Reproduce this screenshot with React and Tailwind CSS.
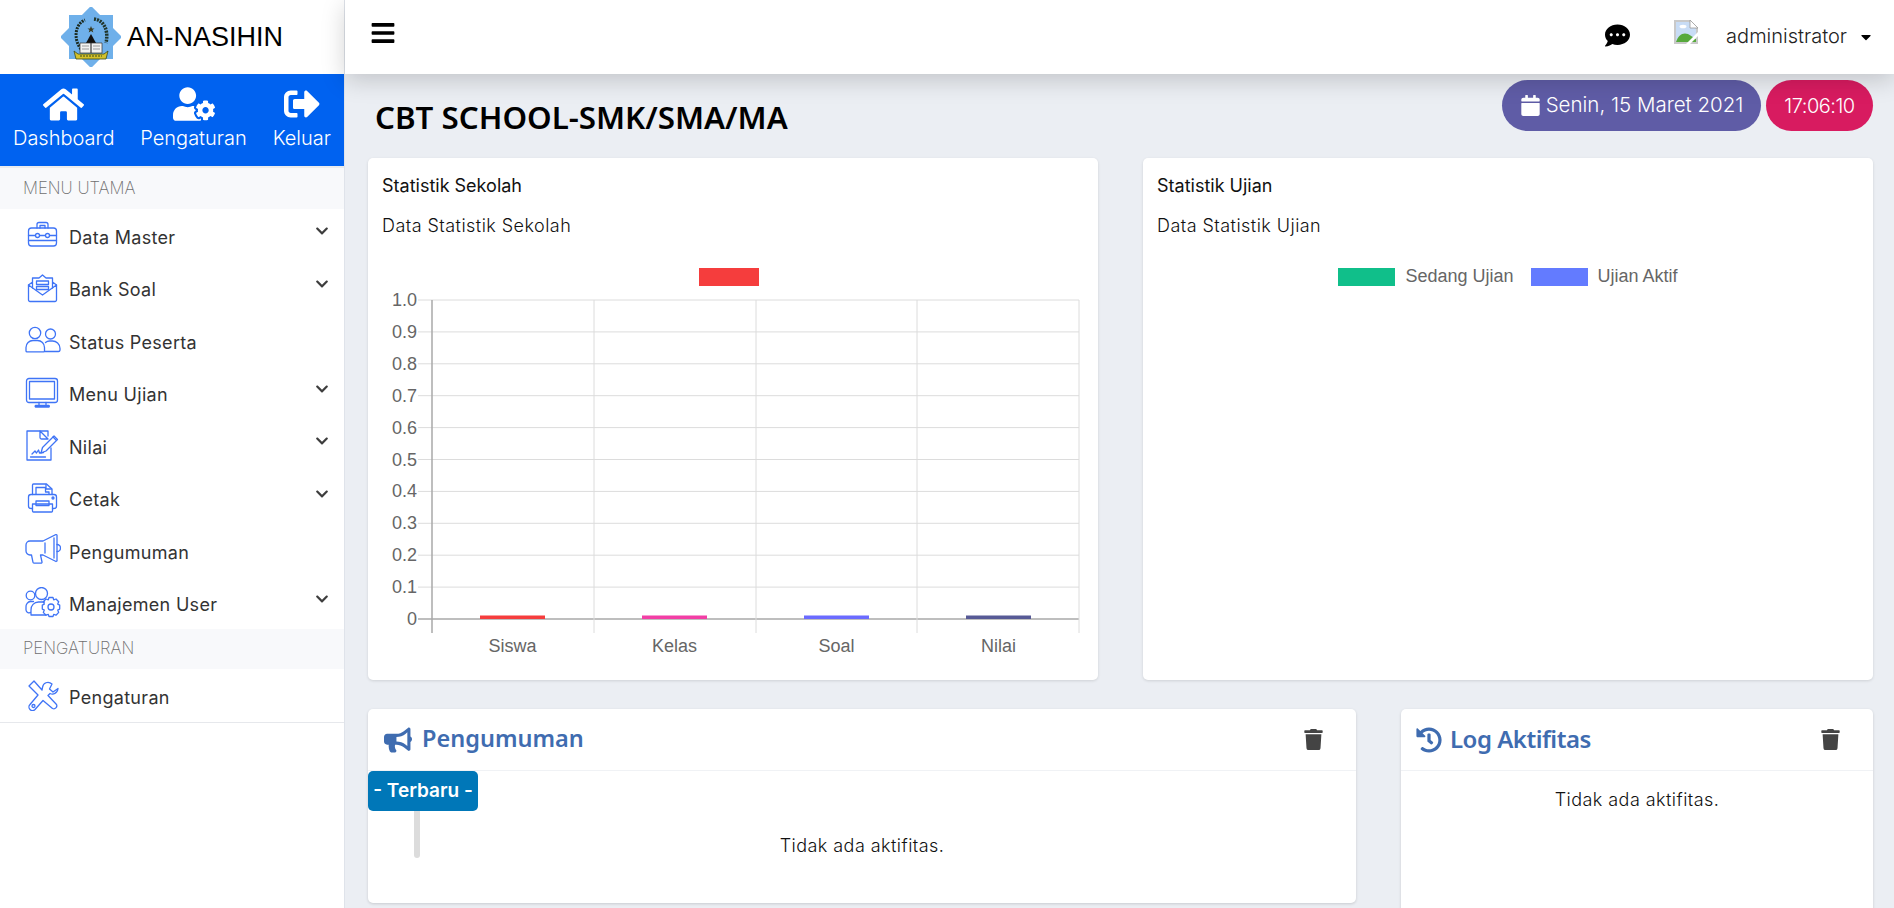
import { FaHome, FaUserCog, FaSignOutAlt, FaCalendar, FaCommentDots, FaChevronDown, FaBullhorn, FaHistory, FaTrash, FaBars, FaCaretDown } from "react-icons/fa";

const poppins = "font-['Inter','Noto_Sans',sans-serif]";

// Outline menu icons, 36x32 box
const Ico = ({ children }) => (
  <svg viewBox="0 0 36 32" className="w-9 h-8 shrink-0" fill="none" stroke="#3f74f6" strokeWidth="1.3" strokeLinecap="round" strokeLinejoin="round">
    {children}
  </svg>
);

const icons = {
  master: (
    <Ico>
      <path d="M12 9V5.5a2 2 0 0 1 2-2h7a2 2 0 0 1 2 2V9M15 9V6.5h5V9" />
      <rect x="3.5" y="9" width="28" height="18" rx="3" />
      <path d="M3.5 16.5h7M15 16.5h5M24.5 16.5h7M3.5 21.5h28" />
      <circle cx="12.5" cy="16.5" r="2" />
      <circle cx="22.5" cy="16.5" r="2" />
    </Ico>
  ),
  soal: (
    <Ico>
      <path d="M3.5 13v15a1.5 1.5 0 0 0 1.5 1.5h25a1.5 1.5 0 0 0 1.5-1.5V13L17.5 23z" />
      <path d="M3.5 13l4-3V6h6.5L17.5 3l3.5 3h6.5v4l4 3M7.5 10v6M27.5 10v6" />
      <rect x="11.5" y="9" width="12" height="3.5" />
      <rect x="11.5" y="14.5" width="12" height="3" />
    </Ico>
  ),
  peserta: (
    <Ico>
      <circle cx="10" cy="9" r="5.7" />
      <circle cx="25.5" cy="10" r="5" />
      <path d="M1 27v-3.5a7 7 0 0 1 7-7h4.5a7 7 0 0 1 7 7V27a.8.8 0 0 1-.8.8H2a1 1 0 0 1-1-.8z" />
      <path d="M20.5 18.5a6 6 0 0 1 4-1.5h2.5a7.5 7.5 0 0 1 8 7.5v1.7a1.5 1.5 0 0 1-1.5 1.3H19.5" />
    </Ico>
  ),
  ujian: (
    <Ico>
      <rect x="1.5" y="1.5" width="31" height="24" rx="2.5" />
      <rect x="4.5" y="4.5" width="25" height="17.5" />
      <path d="M14 25.5v3M21 25.5v3M10.5 28.5a1 1 0 0 0 0 1.5h13.5a1 1 0 0 0 0-1.5z" />
    </Ico>
  ),
  nilai: (
    <Ico>
      <path d="M23 7V2H2v29h24V19" />
      <path d="M15 2v6.5a1.5 1.5 0 0 0 1.5 1.5H23L15 2z" />
      <path d="M16 24l1.5-5.5L29 7l3.5 3.5L21 22z" />
      <path d="M28 8l3 3M7 25l3-3 1.5 2 2-3 1 3 4-.5M5.5 28h15" />
    </Ico>
  ),
  cetak: (
    <Ico>
      <path d="M7.5 12V3a1 1 0 0 1 1-1h13l5.5 5v5" />
      <path d="M11 12V5.5h9.5V10H24v2M21 2.5V7h5.5" />
      <path d="M7.5 12.5H6A2.5 2.5 0 0 0 3.5 15v9A2.5 2.5 0 0 0 6 26.5h1.5M27.5 12.5H29a2.5 2.5 0 0 1 2.5 2.5v9a2.5 2.5 0 0 1-2.5 2.5h-1.5" />
      <path d="M7.5 12.5h20M7.5 22v7a1 1 0 0 0 1 1h18a1 1 0 0 0 1-1v-7z" />
      <rect x="11" y="19" width="13" height="4.5" />
      <circle cx="28" cy="16" r="1" />
    </Ico>
  ),
  pengumuman: (
    <Ico>
      <path d="M5 7h13L31 .5l1 .5v26l-1 .5L18 21h-2.5l1.5 7a1 1 0 0 1-1 1.2H9a1 1 0 0 1-1-.9L6.500 21H5a4 4 0 0 1-4-4v-6a4 4 0 0 1 4-4z" />
      <path d="M20 9v10M29 4v20M32 10.5a3.5 3.5 0 0 1 0 7" />
    </Ico>
  ),
  user: (
    <Ico>
      <circle cx="5.5" cy="8.5" r="4.3" />
      <circle cx="16.5" cy="6.5" r="6" />
      <path d="M6 25a3 3 0 0 1-5-2v-3a5 5 0 0 1 4.5-5.5h3M6 28v-5a7.5 7.5 0 0 1 7.5-8h6M6 28h15" />
      <circle cx="26" cy="20" r="3" />
      <path d="M24 10.500h4l.7 2.300 2.300-.8 2.700 2.800-1 2.300 2 1v4l-2 1 1 2.300-2.700 2.800-2.300-.8-.7 2.100h-4l-.7-2.100-2.300.8-2.700-2.800 1-2.300-2-1v-4l2-1-1-2.300 2.700-2.800 2.300.8z" />
    </Ico>
  ),
  setting: (
    <Ico>
      <path d="M9 2L4 7l9 9-8 9.5a3.5 3.5 0 0 0 5 5l8-9 9.5 8a3 3 0 0 0 4-4l-8.5-9 2-2c3 1.5 7.5 0 8-5l-5 3.5-3.5-3L27 5c-4-3.5-9-1-9.5 3.5L17 11z" />
      <circle cx="8.5" cy="27" r="1.5" />
    </Ico>
  ),
};

const menuUtama = [
  { label: "Data Master", icon: "master", sub: true },
  { label: "Bank Soal", icon: "soal", sub: true },
  { label: "Status Peserta", icon: "peserta" },
  { label: "Menu Ujian", icon: "ujian", sub: true },
  { label: "Nilai", icon: "nilai", sub: true },
  { label: "Cetak", icon: "cetak", sub: true },
  { label: "Pengumuman", icon: "pengumuman" },
  { label: "Manajemen User", icon: "user", sub: true },
];

function Logo() {
  return (
    <svg viewBox="0 0 60 60" className="w-[60px] h-[60px] shrink-0">
      <rect x="8" y="8" width="44" height="44" fill="#6fb0ea" />
      <rect x="8" y="8" width="44" height="44" fill="#6fb0ea" transform="rotate(45 30 30)" />
      <path d="M20 42C12 32 14 17 24 13" fill="none" stroke="#1c2b20" strokeWidth="3" strokeDasharray="2 1" />
      <path d="M33 12c9 1 15 10 12 24" fill="none" stroke="#20352a" strokeWidth="3.5" strokeDasharray="2 1" />
      <path d="M30 19l1 2.5h2.5l-2 1.5.8 2.5-2.3-1.5-2.3 1.5.8-2.5-2-1.5H29z" fill="#3a3a1e" />
      <path d="M30 27l5 9H25z" fill="#111" />
      <path d="M19 36h11v10H19zM30 36h11v10H30z" fill="#f2f2f2" stroke="#333" strokeWidth="0.7" />
      <path d="M21 39h7M21 42h7M32 39h7M32 42h7" stroke="#777" strokeWidth="0.7" />
      <path d="M13 44l4 3h26l4-3-2 8H15z" fill="#d4c22c" stroke="#3b4a1a" strokeWidth="0.8" />
      <path d="M19 49h22" stroke="#3b4a1a" strokeWidth="1.2" strokeDasharray="2 1" />
    </svg>
  );
}

function MenuItem({ label, icon, sub }) {
  return (
    <div className="h-[52.5px] flex items-center pl-[25px] pr-[15px] gap-2 text-[#333]">
      {icons[icon]}
      <span className={`${poppins} flex-1 text-[18px] tracking-[0.3px] font-normal pt-1`}>{label}</span>
      {sub && <FaChevronDown className="text-[14px] -mt-2 text-[#3d3d3d]" />}
    </div>
  );
}

function Section({ children, cls }) {
  return (
    <div className={`${poppins} ${cls} flex items-center pl-[23px] bg-[#f8f9fb] text-[16.7px] font-extralight text-[#6f6f6f]`}>
      {children}
    </div>
  );
}

function QuickLink({ Icon, label, iconCls }) {
  return (
    <div className="flex flex-col items-center gap-[5px]">
      <div className="h-[34px] flex items-center"><Icon className={iconCls} /></div>
      <span className={`${poppins} text-[20px] leading-[24px] font-light text-white`}>{label}</span>
    </div>
  );
}

function SchoolChart() {
  const ticks = ["1.0", "0.9", "0.8", "0.7", "0.6", "0.5", "0.4", "0.3", "0.2", "0.1", "0"];
  const cols = [64, 226, 388, 549, 711];
  const bars = [
    { label: "Siswa", x: 112, color: "#f53d3d" },
    { label: "Kelas", x: 274, color: "#f23fa5" },
    { label: "Soal", x: 436, color: "#6b6bff" },
    { label: "Nilai", x: 598, color: "#575a96" },
  ];
  return (
    <svg viewBox="0 0 730 422" className="w-full h-[422px] block">
      <rect x="331" y="10" width="60" height="18" fill="#f53d3d" />
      {ticks.map((t, i) => {
        const y = 42 + i * 31.9;
        return (
          <g key={t}>
            <line x1="50" x2="711" y1={y} y2={y} stroke={t === "0" ? "#a8a8a8" : "#dcdcdc"} strokeWidth={t === "0" ? 1.5 : 1} />
            <text x="49" y={y + 6} textAnchor="end" fontFamily="Liberation Sans" fontSize="18" fill="#666">{t}</text>
          </g>
        );
      })}
      {cols.map((x, i) => (
        <line key={x} x1={x} x2={x} y1="42" y2="375" stroke={i === 0 ? "#a8a8a8" : "#dcdcdc"} strokeWidth={i === 0 ? 1.5 : 1} />
      ))}
      {bars.map((b) => (
        <g key={b.label}>
          <rect x={b.x} y="357.5" width="65" height="3.5" fill={b.color} />
          <text x={b.x + 32.5} y="394" textAnchor="middle" fontFamily="Liberation Sans" fontSize="18" fill="#666">{b.label}</text>
        </g>
      ))}
    </svg>
  );
}

function StatCard({ title, sub, children }) {
  return (
    <div className="w-[730px] h-[522px] bg-white rounded-[5px] shadow-[0_1px_3px_rgba(0,0,0,0.12)]">
      <div className="h-[100px] px-[14px] pt-[16px]">
        <div className={`${poppins} text-[18px] leading-6 font-normal text-[#111]`}>{title}</div>
        <div className={`${poppins} text-[18px] tracking-[0.45px] leading-6 font-light text-[#111] mt-4`}>{sub}</div>
      </div>
      {children}
    </div>
  );
}

function PanelHead({ Icon, title, titleCls, iconCls, padCls, gapCls }) {
  return (
    <div className={`h-[62px] flex items-center justify-between border-b border-[#f0f2f5] ${padCls}`}>
      <div className={`flex items-center ${gapCls}`}>
        <Icon className={`text-[#3f6cb0] ${iconCls}`} />
        <span className={`font-['Noto_Sans',sans-serif] font-semibold text-[#3f6cb0] -mt-[2px] ${titleCls}`}>{title}</span>
      </div>
      <FaTrash className="text-[#444] text-[21px]" />
    </div>
  );
}

export default function App() {
  return (
    <div className="flex w-full h-[908px] overflow-hidden bg-[#ebeef3]">
      {/* Sidebar */}
      <aside className="w-[345px] shrink-0 h-full bg-white border-r border-[#dfe3ea] flex flex-col">
        <div className="h-[74px] flex items-center pl-[61px] gap-[6px]">
          <Logo />
          <span className="font-['Liberation_Sans',sans-serif] text-[27px] text-black">AN-NASIHIN</span>
        </div>
        <div className="h-[92px] bg-[#0062f0] flex items-start justify-between pl-[13px] pr-[13px] pt-[13px]">
          <QuickLink Icon={FaHome} label="Dashboard" iconCls="text-white text-[41px]" />
          <QuickLink Icon={FaUserCog} label="Pengaturan" iconCls="text-white text-[42px]" />
          <QuickLink Icon={FaSignOutAlt} label="Keluar" iconCls="text-white text-[36px]" />
        </div>
        <div className="h-[2px] bg-[#e9ecef]" />
        <Section cls="h-[41px]">MENU UTAMA</Section>
        {menuUtama.map((m) => <MenuItem key={m.label} {...m} />)}
        <Section cls="h-10">PENGATURAN</Section>
        <div className="border-b border-[#e6e8ec]">
          <MenuItem label="Pengaturan" icon="setting" />
        </div>
      </aside>

      {/* Main */}
      <main className="flex-1 min-w-0 flex flex-col">
        <header className="relative z-10 h-[74px] shrink-0 bg-white shadow-[0_6px_24px_rgba(0,0,0,0.18)] flex items-center pl-[25px] pr-[20px]">
          <FaBars className="text-[26px] text-black -mt-2" />
          <div className="ml-auto flex items-center">
            <FaCommentDots className="text-[25px] text-black -mt-[3px] mr-[44px]" />
            <svg viewBox="0 0 24 24" className="w-6 h-6 -mt-[10px] mr-[28px]">
              <path d="M0 0h16l8 8v16H0z" fill="#c9c9c9" />
              <path d="M2 2h13l7 7v13H2z" fill="#c8dcf5" />
              <path d="M2 22c2-7 7-10 12-8l8 5v3z" fill="#57a93c" />
              <path d="M16 0v8h8z" fill="#fff" stroke="#999" strokeWidth="0.8" />
              <path d="M12 24L24 12v4l-8 8z" fill="#fff" />
              <ellipse cx="9" cy="6.5" rx="3.5" ry="1.8" fill="#fff" />
            </svg>
            <span className={`${poppins} text-[20px] font-light text-[#222] -mt-[2px]`}>administrator</span>
            <FaCaretDown className="text-[16px] text-black ml-[11px]" />
          </div>
        </header>

        <div className="flex-1 min-h-0 pl-[23px] pr-[21px]">
          <div className="h-[84px] flex items-start justify-between">
            <h1 className="font-['Noto_Sans',sans-serif] font-semibold text-[31.3px] text-black ml-[7px] mt-[15px] leading-[56px] -mb-2">CBT SCHOOL-SMK/SMA/MA</h1>
            <div className="flex gap-[5px] mt-[6px]">
              <div className={`${poppins} w-[259px] h-[51px] rounded-full bg-[#5f5ca6] text-white text-[20.5px] font-light flex items-center justify-center gap-[5px]`}>
                <FaCalendar className="text-[21px]" />
                Senin, 15 Maret 2021
              </div>
              <div className={`${poppins} w-[107px] h-[51px] rounded-full bg-[#d81b60] text-white text-[20px] tracking-[-0.5px] font-light flex items-center justify-center`}>
                17:06:10
              </div>
            </div>
          </div>

          <div className="flex justify-between">
            <StatCard title="Statistik Sekolah" sub="Data Statistik Sekolah">
              <SchoolChart />
            </StatCard>
            <StatCard title="Statistik Ujian" sub="Data Statistik Ujian">
              <div className="flex justify-center items-center gap-[10px] pt-[5px] font-['Liberation_Sans',sans-serif] text-[18px] text-[#666]">
                <span className="w-[57px] h-[18px] bg-[#10bf8a]" />
                <span className="mr-[7px]">Sedang Ujian</span>
                <span className="w-[57px] h-[18px] bg-[#637bff]" />
                <span>Ujian Aktif</span>
              </div>
            </StatCard>
          </div>

          <div className="flex justify-between items-start mt-[29px]">
            <div className="w-[988px] h-[194px] bg-white rounded-[5px] shadow-[0_1px_3px_rgba(0,0,0,0.15)]">
              <PanelHead Icon={FaBullhorn} title="Pengumuman" titleCls="text-[23.5px]" iconCls="text-[28px]" padCls="pl-[16px] pr-[32px]" gapCls="gap-[10px]" />
              <div className="relative h-[132px]">
                <div className="absolute left-0 top-0 flex flex-col items-start w-[110px]">
                  <div className={`${poppins} w-full h-10 rounded-[5px] bg-[#0077b8] text-white text-[19px] font-semibold flex items-center justify-center`}>- Terbaru -</div>
                  <div className="ml-[46px] w-[6px] h-[47px] bg-[#dcdcdc] rounded-b-[3px]" />
                </div>
                <p className={`${poppins} text-center text-[18px] tracking-[0.45px] font-light text-[#111] pt-[61px]`}>Tidak ada aktifitas.</p>
              </div>
            </div>
            <div className="w-[472px] h-[300px] bg-white rounded-[5px] shadow-[0_1px_3px_rgba(0,0,0,0.15)]">
              <PanelHead Icon={FaHistory} title="Log Aktifitas" titleCls="text-[24px] tracking-[-0.5px]" iconCls="text-[26px]" padCls="pl-[15px] pr-[32px]" gapCls="gap-2" />
              <p className={`${poppins} text-center text-[18px] tracking-[0.45px] font-light text-[#111] pt-[15px]`}>Tidak ada aktifitas.</p>
            </div>
          </div>
        </div>
      </main>
    </div>
  );
}
